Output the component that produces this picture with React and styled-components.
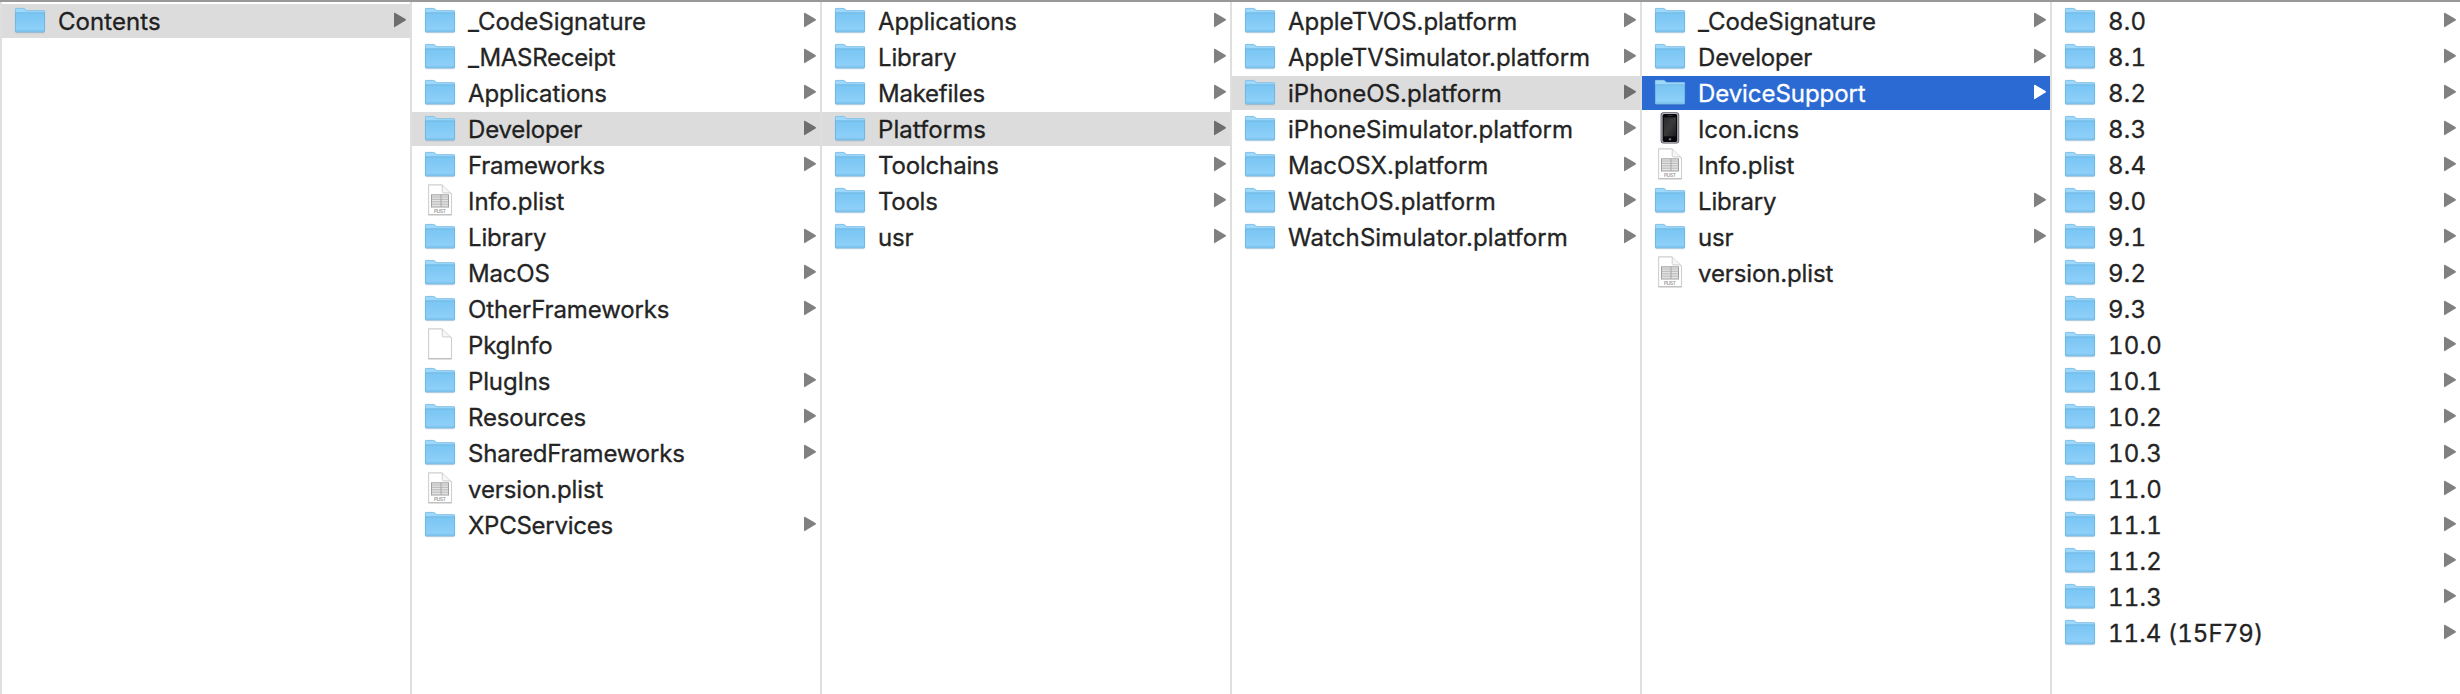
import React from "react";
import styled, { createGlobalStyle, css } from "styled-components";

const GlobalStyle = createGlobalStyle`
  * { box-sizing: border-box; }
  body { margin: 0; background: #fff; font-family: Inter, "Liberation Sans", sans-serif; }
`;

const Browser = styled.main`
  display: grid;
  grid-template-columns: repeat(6, 410px);
  width: 2460px;
  height: 694px;
  overflow: hidden;
  border-top: 2px solid #999797;
`;

const Column = styled.ul`
  display: flex;
  flex-direction: column;
  gap: 2px;
  margin: 0;
  padding: 2px 0 0;
  list-style: none;
  border-left: 2px solid #dfdfdf;
`;

const tones = {
  plain: { background: "transparent", text: "#242424", arrow: "#808080" },
  path: { background: "#dcdcdc", text: "#202020", arrow: "#6e6e6e" },
  active: { background: "#2b69d3", text: "#ffffff", arrow: "#ffffff" },
};

const Row = styled.li`
  display: flex;
  align-items: center;
  height: 34px;
  padding: 0 2px 0 12px;
  background: ${(p) => tones[p.$tone].background};
  color: ${(p) => tones[p.$tone].text};
`;

const IconSlot = styled.span`
  display: flex;
  flex: none;
  width: 32px;
  height: 34px;
  margin-right: 12px;
`;

const Label = styled.span`
  flex: 1;
  padding-top: 2px;
  font-size: 24px;
  line-height: 34px;
  letter-spacing: ${(p) => p.$spacing}px;
  white-space: nowrap;
  -webkit-text-stroke: 0.3px currentColor;
  ${(p) =>
    p.$numeric &&
    css`
      font-kerning: none;
      font-variant-numeric: tabular-nums;
    `}
`;

const Arrow = styled.svg`
  flex: none;
  width: 14px;
  height: 34px;
  fill: ${(p) => tones[p.$tone].arrow};
`;

const Definitions = styled.svg`
  display: block;
  width: 0;
  height: 0;
`;

function Folder() {
  return (
    <svg width="32" height="34" viewBox="0 0 32 34">
      <path d="M1.5 28.2h29v.4q0 .7-.7.7H2.2q-.7 0-.7-.7z" fill="#000" opacity=".17" />
      <path d="M1 5.1Q1 4 2 4h7.4q.8 0 1.5.7l1.4 1.2q.5.4 1.2.4H30q1 0 1 1V12H1z" fill="#9ed8fa" />
      <path d="M1.4 9V5.2q0-.8.8-.8h7.1q.7 0 1.3.6l1.4 1.2q.6.5 1.4.5h16.4q.8 0 .8.8V9" fill="none" stroke="#7fbde2" strokeWidth=".8" />
      <path d="M1 8.6h30v18.7q0 1-1 1H2q-1 0-1-1z" fill="url(#folderFace)" />
      <path d="M1 8.9h30" stroke="#70b6e0" strokeWidth=".8" />
      <path d="M1.4 9v18q0 .9.9.9h27.4q.9 0 .9-.9V9" fill="none" stroke="#69b0dc" strokeWidth=".8" />
      <path d="M2 26.4h28" stroke="#79bde6" strokeWidth=".7" />
    </svg>
  );
}

function Sheet({ plist }) {
  return (
    <svg width="32" height="34" viewBox="0 0 32 34">
      <path d="M4.6.9h13.4l9.5 9.2v20.6H4.6z" fill="#fff" stroke="#cfcfcf" strokeWidth="1.1" strokeLinejoin="round" />
      <path d="M4.6 30.8h22.9" stroke="#b9b9b9" strokeWidth="1.1" />
      <path d="M18.2 1.2v6.4q0 1.3 1.3 1.3h6.9" fill="#f6f6f6" stroke="#cecece" strokeWidth="1" />
      {plist && (
        <>
          <rect x="7.5" y="10.8" width="17" height="12.2" fill="#e4e4e4" stroke="#a0a0a0" />
          <path d="M8 13h16M8 15.4h16M8 17.8h16M8 20.2h16" stroke="#b4b4b4" strokeWidth=".9" />
          <path d="M17 10.5v12.5" stroke="#a6a6a6" />
          <text x="16" y="29" textAnchor="middle" fontSize="4.8" fontWeight="600" fill="#999" textLength="12">PLIST</text>
        </>
      )}
    </svg>
  );
}

function Phone() {
  return (
    <svg width="32" height="34" viewBox="0 0 32 34">
      <rect x="6.6" y=".2" width="18.6" height="31.3" rx="3" fill="#55555c" />
      <rect x="7.4" y=".9" width="17" height="29.9" rx="2.4" fill="#b6b6c0" />
      <rect x="8.6" y="1.9" width="14.6" height="28" rx="1.6" fill="#08080a" />
      <rect x="9.8" y="5.4" width="12.2" height="19" fill="url(#phoneGlass)" />
      <path d="M13.5 3.6h5" stroke="#3c3c40" strokeWidth=".8" />
      <rect x="14.8" y="26.2" width="2.4" height="2" rx=".5" fill="#77777c" />
    </svg>
  );
}

const icons = {
  folder: <Folder />,
  plist: <Sheet plist />,
  file: <Sheet />,
  phone: <Phone />,
};

function Entry({ name, icon = "folder", tone = "plain", spacing = 0, numeric = false }) {
  return (
    <Row $tone={tone}>
      <IconSlot>{icons[icon]}</IconSlot>
      <Label $spacing={spacing} $numeric={numeric}>{name}</Label>
      {icon === "folder" && (
        <Arrow $tone={tone} viewBox="0 0 14 34">
          <path d="M0 9.4Q0 8.5.9 8.8l10.6 6.1q1 .9 0 1.7L.9 23Q0 23.4 0 22.6z" />
        </Arrow>
      )}
    </Row>
  );
}

const columns = [
  [{ name: "Contents", tone: "path", spacing: 0.06 }],
  [
    { name: "_CodeSignature", spacing: -0.06 },
    { name: "_MASReceipt", spacing: -0.29 },
    { name: "Applications", spacing: -0.08 },
    { name: "Developer", tone: "path", spacing: -0.18 },
    { name: "Frameworks", spacing: -0.26 },
    { name: "Info.plist", icon: "plist", spacing: -0.06 },
    { name: "Library", spacing: -0.18 },
    { name: "MacOS", spacing: -0.2 },
    { name: "OtherFrameworks", spacing: -0.12 },
    { name: "PkgInfo", icon: "file", spacing: -0.2 },
    { name: "PlugIns", spacing: -0.14 },
    { name: "Resources", spacing: -0.15 },
    { name: "SharedFrameworks", spacing: -0.2 },
    { name: "version.plist", icon: "plist", spacing: -0.13 },
    { name: "XPCServices", spacing: -0.26 },
  ],
  [
    { name: "Applications", spacing: -0.08 },
    { name: "Library", spacing: -0.18 },
    { name: "Makefiles", spacing: -0.23 },
    { name: "Platforms", tone: "path", spacing: 0.06 },
    { name: "Toolchains", spacing: -0.16 },
    { name: "Tools", spacing: -0.27 },
    { name: "usr", spacing: -0.2 },
  ],
  [
    { name: "AppleTVOS.platform", spacing: -0.04 },
    { name: "AppleTVSimulator.platform", spacing: -0.01 },
    { name: "iPhoneOS.platform", tone: "path", spacing: 0.06 },
    { name: "iPhoneSimulator.platform", spacing: 0.03 },
    { name: "MacOSX.platform", spacing: 0.03 },
    { name: "WatchOS.platform", spacing: 0.09 },
    { name: "WatchSimulator.platform", spacing: 0.09 },
  ],
  [
    { name: "_CodeSignature", spacing: -0.06 },
    { name: "Developer", spacing: -0.18 },
    { name: "DeviceSupport", tone: "active", spacing: -0.07 },
    { name: "Icon.icns", icon: "phone", spacing: -0.12 },
    { name: "Info.plist", icon: "plist", spacing: -0.06 },
    { name: "Library", spacing: -0.18 },
    { name: "usr", spacing: -0.2 },
    { name: "version.plist", icon: "plist", spacing: -0.13 },
  ],
  [
    "8.0", "8.1", "8.2", "8.3", "8.4", "9.0", "9.1", "9.2", "9.3", "10.0", "10.1",
    "10.2", "10.3", "11.0", "11.1", "11.2", "11.3", "11.4 (15F79)",
  ].map((name) => ({ name, numeric: true, spacing: name.length > 4 ? 0.05 : 0.2 })),
];

export default function App() {
  return (
    <>
      <GlobalStyle />
      <Definitions>
        <defs>
          <linearGradient id="folderFace" x1="0" y1="0" x2="0" y2="1">
            <stop offset="0" stopColor="#79c5f3" />
            <stop offset="1" stopColor="#90d2fa" />
          </linearGradient>
          <linearGradient id="phoneGlass" x1="0" y1="0" x2="1" y2="1">
            <stop offset="0" stopColor="#2c2c2e" />
            <stop offset=".5" stopColor="#3a3a3b" />
            <stop offset="1" stopColor="#1b1b1c" />
          </linearGradient>
        </defs>
      </Definitions>
      <Browser>
        {columns.map((entries, index) => (
          <Column key={index}>
            {entries.map((entry) => (
              <Entry key={entry.name} {...entry} />
            ))}
          </Column>
        ))}
      </Browser>
    </>
  );
}
